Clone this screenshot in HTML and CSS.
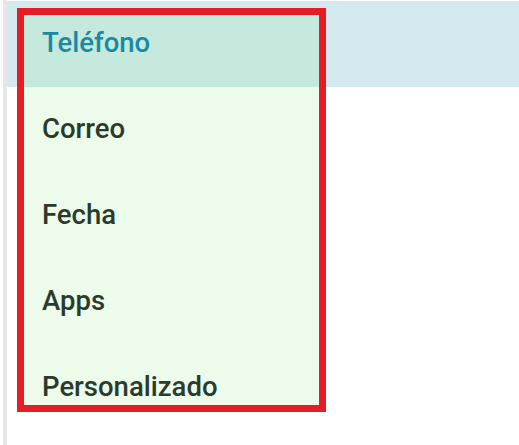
FILE: index.html
```html
<!DOCTYPE html>
<html lang="es">
<head>
<meta charset="utf-8">
<link rel="stylesheet" href="styles.css">
</head>
<body>
<div class="page">
  <div class="rail"></div>
  <div class="main">
    <div class="band"></div>
  </div>
  <div class="menu">
    <ul class="list">
      <li class="item active">Teléfono</li>
      <li class="item">Correo</li>
      <li class="item">Fecha</li>
      <li class="item">Apps</li>
      <li class="item">Personalizado</li>
    </ul>
  </div>
</div>
</body>
</html>
```
FILE: styles.css
```css
html, body {
  margin: 0;
  padding: 0;
  background: #ffffff;
}
.page {
  position: relative;
  width: 519px;
  height: 445px;
  display: flex;
  font-family: Roboto, "Noto Sans", sans-serif;
}
.rail {
  width: 4px;
  margin-left: 3px;
  background: #e6e6e6;
}
.main {
  flex: 1;
  padding-top: 1px;
}
.band {
  height: 86px;
  background: #d4e9f0;
}
.menu {
  position: absolute;
  left: 17px;
  top: 8px;
  width: 295px;
  height: 390px;
  border: 7px solid #e81c24;
  background: #edfbea;
  overflow: hidden;
}
.list {
  list-style: none;
  margin: -14px 0 0 0;
  padding: 0;
}
.item {
  box-sizing: border-box;
  height: 86px;
  padding: 0 0 4px 18px;
  display: flex;
  align-items: center;
  font-size: 27.5px;
  font-weight: 500;
  color: #2a3a2c;
}
.item.active {
  background: #c6e9dd;
  color: #1a8aa3;
}
```
